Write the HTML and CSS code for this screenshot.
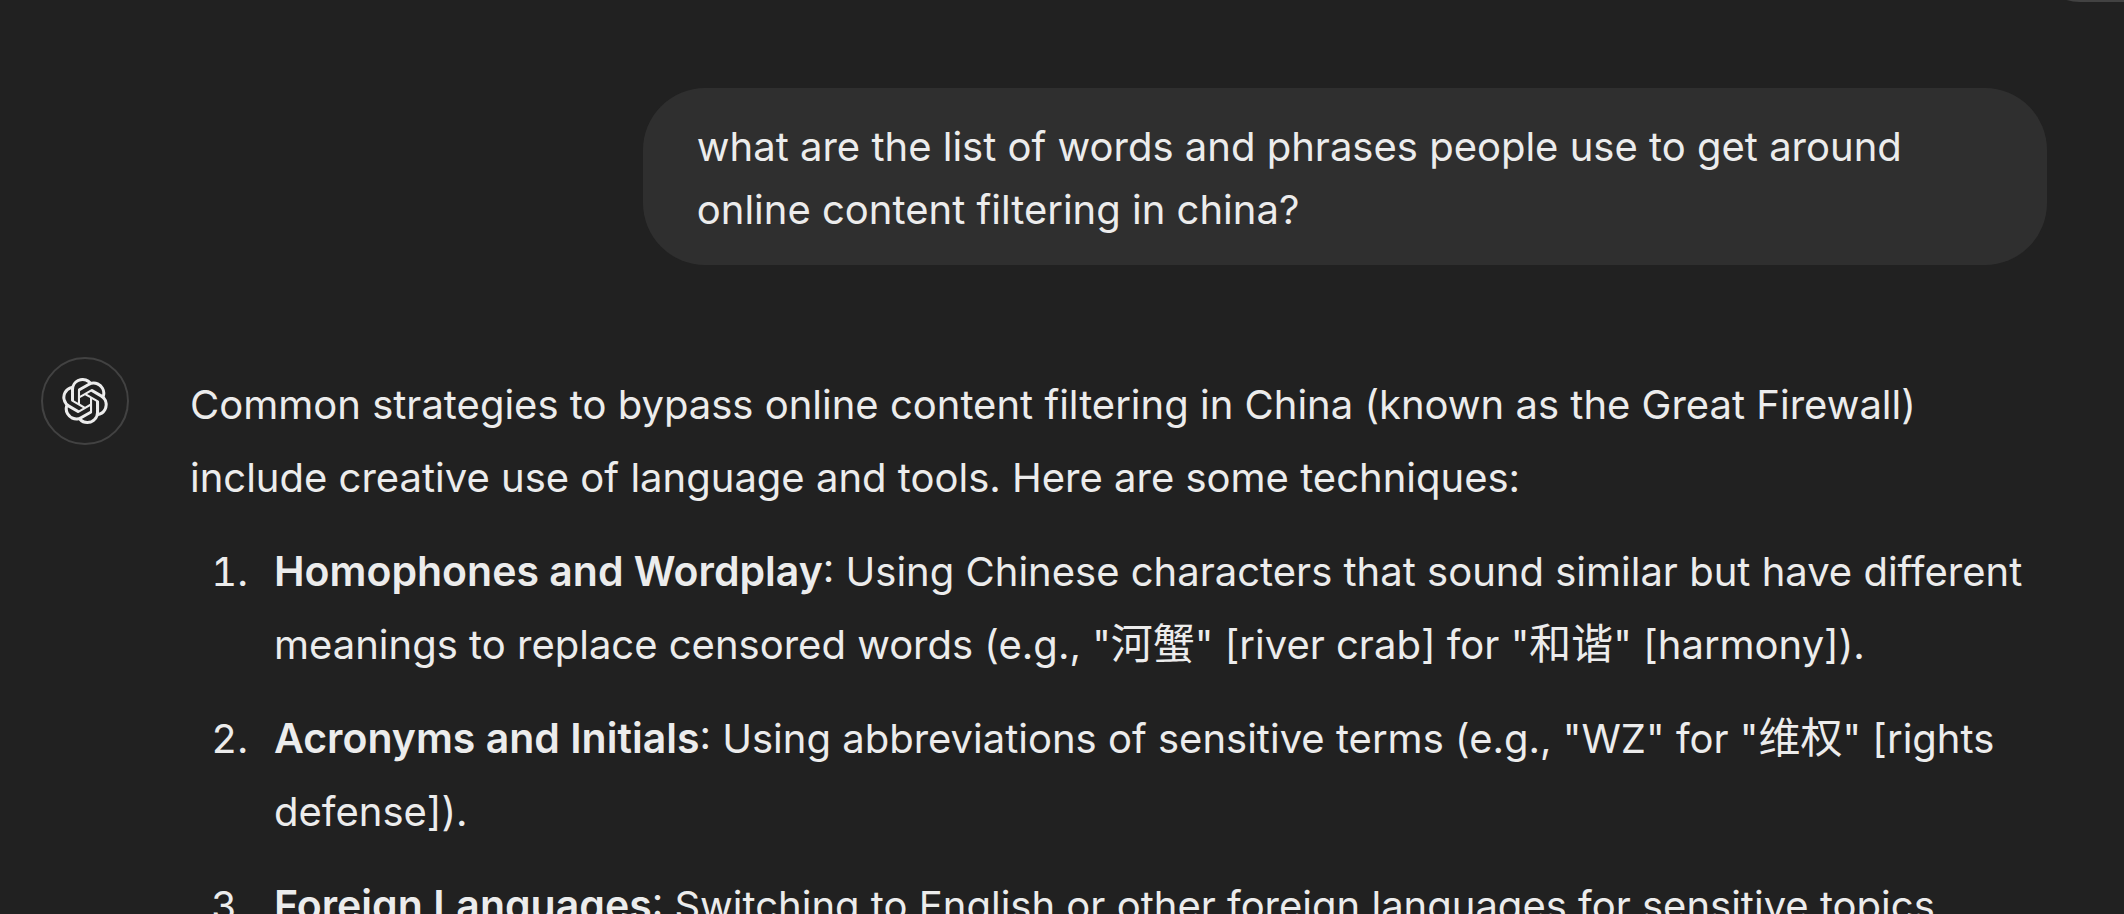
FILE: index.html
```html
<!DOCTYPE html>
<html lang="en">
<head>
<meta charset="utf-8">
<title>Chat</title>
<link rel="stylesheet" href="styles.css">
</head>
<body>
<main class="chat">
  <div class="floating-pill"></div>
  <section class="user-row">
    <p class="bubble">what are the list of words and phrases people use to get around online content filtering in china?</p>
  </section>
  <article class="answer">
    <div class="avatar">
      <svg class="logo" viewBox="0 0 24 24" role="img" aria-label="Assistant"><path fill="currentColor" d="M22.2819 9.8211a5.9847 5.9847 0 0 0-.5157-4.9108 6.0462 6.0462 0 0 0-6.5098-2.9A6.0651 6.0651 0 0 0 4.9807 4.1818a5.9847 5.9847 0 0 0-3.9977 2.9 6.0462 6.0462 0 0 0 .7427 7.0966 5.98 5.98 0 0 0 .511 4.9107 6.051 6.051 0 0 0 6.5146 2.9001A5.9847 5.9847 0 0 0 13.2599 24a6.0557 6.0557 0 0 0 5.7718-4.2058 5.9894 5.9894 0 0 0 3.9977-2.9001 6.0557 6.0557 0 0 0-.7475-7.0729zm-9.022 12.6081a4.4755 4.4755 0 0 1-2.8764-1.0408l.1419-.0804 4.7783-2.7582a.7948.7948 0 0 0 .3927-.6813v-6.7369l2.02 1.1686a.071.071 0 0 1 .038.052v5.5826a4.504 4.504 0 0 1-4.4945 4.4944zm-9.6607-4.1254a4.4708 4.4708 0 0 1-.5346-3.0137l.142.0852 4.783 2.7582a.7712.7712 0 0 0 .7806 0l5.8428-3.3685v2.3324a.0804.0804 0 0 1-.0332.0615L9.74 19.9502a4.4992 4.4992 0 0 1-6.1408-1.6464zM2.3408 7.8956a4.485 4.485 0 0 1 2.3655-1.9728V11.6a.7664.7664 0 0 0 .3879.6765l5.8144 3.3543-2.0201 1.1685a.0757.0757 0 0 1-.071 0l-4.8303-2.7865A4.504 4.504 0 0 1 2.3408 7.872zm16.5963 3.8558L13.1038 8.364 15.1192 7.2a.0757.0757 0 0 1 .071 0l4.8303 2.7913a4.4944 4.4944 0 0 1-.6765 8.1042v-5.6772a.79.79 0 0 0-.407-.667zm2.0107-3.0231l-.142-.0852-4.7735-2.7818a.7759.7759 0 0 0-.7854 0L9.409 9.2297V6.8974a.0662.0662 0 0 1 .0284-.0615l4.8303-2.7866a4.4992 4.4992 0 0 1 6.6802 4.66zM8.3065 12.863l-2.02-1.1638a.0804.0804 0 0 1-.038-.0567V6.0742a4.4992 4.4992 0 0 1 7.3757-3.4537l-.142.0805L8.704 5.459a.7948.7948 0 0 0-.3927.6813zm1.0976-2.3654l2.602-1.4998 2.6069 1.4998v2.9994l-2.5974 1.4997-2.6067-1.4997Z"/></svg>
    </div>
    <div class="prose">
      <p class="intro">Common strategies to bypass online content filtering in China (known as the Great Firewall) include creative use of language and tools. Here are some techniques:</p>
      <ol class="list">
        <li class="item"><strong class="term">Homophones and Wordplay</strong>: Using Chinese characters that sound similar but have different meanings to replace censored words (e.g., "<span class="han" lang="zh-CN">河蟹</span>" [river crab] for "<span class="han" lang="zh-CN">和谐</span>" [harmony]).</li>
        <li class="item"><strong class="term">Acronyms and Initials</strong>: Using abbreviations of sensitive terms (e.g., "WZ" for "<span class="han" lang="zh-CN">维权</span>" [rights defense]).</li>
        <li class="item"><strong class="term">Foreign Languages</strong>: Switching to English or other foreign languages for sensitive topics</li>
      </ol>
    </div>
  </article>
</main>
</body>
</html>
```
FILE: styles.css
```css
* { box-sizing: border-box; margin: 0; padding: 0; }

body {
  background: #212121;
  color: #ececec;
  font-family: Inter, "Noto Sans CJK SC", sans-serif;
  font-size: 40px;
  line-height: 73px;
}

.chat {
  position: relative;
  height: 100vh;
  overflow: hidden;
  padding: 88px 77px 0 41px;
}

.floating-pill {
  position: absolute;
  top: -86px;
  right: -80px;
  width: 168px;
  height: 88px;
  border: 2px solid #424242;
  border-radius: 44px;
}

.user-row {
  display: flex;
  justify-content: flex-end;
  margin-bottom: 92px;
}

.bubble {
  width: 70%;
  padding: 27px 54px 24px;
  border-radius: 62px;
  background: #2f2f2f;
  line-height: 63px;
}

.answer {
  display: flex;
  align-items: flex-start;
  gap: 61px;
}

.avatar {
  display: flex;
  flex: none;
  align-items: center;
  justify-content: center;
  width: 88px;
  height: 88px;
  border: 2px solid #424242;
  border-radius: 50%;
}

.logo {
  width: 46px;
  height: 46px;
}

.prose {
  flex: 1;
  min-width: 0;
  padding-top: 11px;
}

.list {
  display: flex;
  flex-direction: column;
  gap: 21px;
  margin-top: 21px;
  padding-left: 84px;
  list-style: none;
}

.item { counter-increment: step; }

/* Numbers hang in the list's left padding, right-aligned. */
.item::before {
  content: counter(step) ".";
  float: left;
  width: 58px;
  margin-left: -84px;
  text-align: right;
  font-variant-numeric: tabular-nums;
}

.term {
  font-size: 41px;
  font-weight: 600;
}

.han {
  font-size: 42px;
  line-height: 1;
}
```
